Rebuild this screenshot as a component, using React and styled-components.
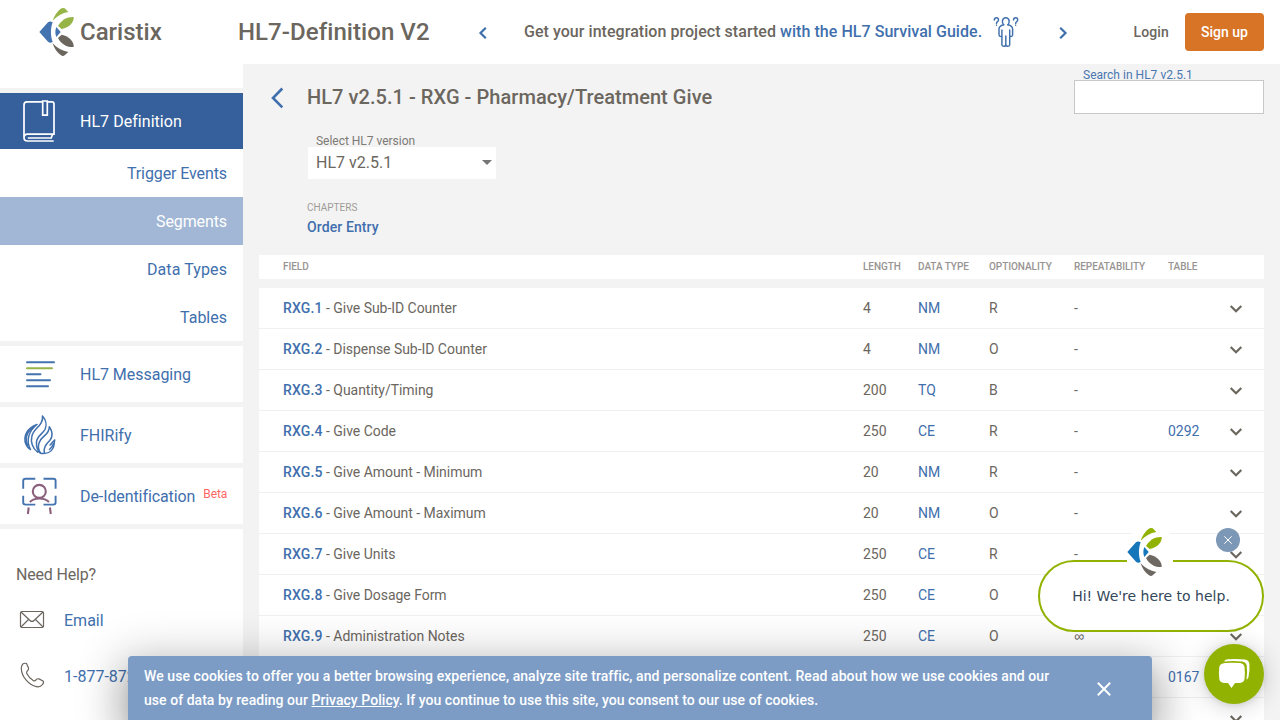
import React from 'react';
import styled, { createGlobalStyle } from 'styled-components';

const GlobalStyle = createGlobalStyle`
  *, *::before, *::after { box-sizing: border-box; }
  body { margin: 0; background: #f3f3f3; color: #6b665e; font-family: Roboto, "Liberation Sans", sans-serif; }
  a { color: #3f6fad; text-decoration: none; }
`;

const Page = styled.div`
  height: 720px;
  display: flex;
  flex-direction: column;
  overflow: hidden;
  position: relative;
`;

const Header = styled.header`
  flex: none;
  height: 64px;
  background: #fff;
  display: flex;
  align-items: center;
  padding: 0 16px 0 39px;
  font-weight: 500;
`;
const Brand = styled.div`
  width: 199px;
  display: flex;
  align-items: center;
  font-size: 24px;
  white-space: nowrap;
`;
const BrandName = styled.span`margin-left: 6px;`;
const ProductName = styled.div`
  width: 233px;
  font-size: 24px;
  letter-spacing: 0.06px;
  white-space: nowrap;
`;
const Promo = styled.div`
  width: 604px;
  display: flex;
  align-items: center;
  font-size: 16px;
  letter-spacing: 0.047px;
  white-space: nowrap;
`;
const PromoText = styled.span`margin-left: 29px; width: 459px; padding-bottom: 2px; white-space: pre;`;
const PromoFigure = styled.span`
  width: 28px;
  height: 32px;
  margin: 0 29px 0 10px;
  display: flex;
`;
const Login = styled.span`
  margin-left: auto;
  margin-right: 16px;
  font-size: 14px;
  letter-spacing: 0.15px;
`;
const SignUp = styled.button`
  width: 79px;
  height: 38px;
  padding: 0;
  border: 0;
  border-radius: 4px;
  background: #d87426;
  color: #fff;
  font: 500 14px Roboto, sans-serif;
`;

const Body = styled.div`flex: 1; min-height: 0; display: flex;`;

const Sidebar = styled.aside`
  width: 243px;
  flex: none;
  display: flex;
  flex-direction: column;
  overflow: hidden;
`;
const SidebarTop = styled.div`flex: none; height: 24px; background: #fff;`;
const NavItem = styled.div`
  flex: none;
  height: 56px;
  margin-top: 5px;
  display: flex;
  align-items: center;
  font-size: 16px;
  letter-spacing: ${p => p.$spacing || 0}px;
  color: ${p => (p.$active ? '#fff' : '#3f6fad')};
  background: ${p => (p.$active ? '#35609c' : '#fff')};
`;
const NavIcon = styled.span`width: 80px; height: 56px; flex: none; display: flex;`;
const Beta = styled.sup`
  margin-left: 8px;
  font-size: 12px;
  line-height: 14px;
  padding-bottom: 5px;
  color: #ff6663;
`;
const SubItem = styled.div`
  flex: none;
  height: 48px;
  padding-right: 16px;
  display: flex;
  align-items: center;
  justify-content: flex-end;
  font-size: 16px;
  letter-spacing: ${p => p.$spacing || 0}px;
  background: ${p => (p.$active ? '#a1b7d5' : '#fff')};
  color: ${p => (p.$active ? '#fff' : '#3f6fad')};
`;
const Help = styled.section`
  flex: 1;
  margin-top: 5px;
  padding: 36px 16px 0;
  background: #fff;
  font-size: 16px;
`;
const HelpTitle = styled.div`line-height: 20px; margin-bottom: 7px; letter-spacing: -0.18px;`;
const HelpRow = styled.div`
  height: 56px;
  display: flex;
  align-items: center;
  white-space: nowrap;
`;
const HelpIcon = styled.span`width: 48px; height: 32px; display: flex; flex: none;`;

const Main = styled.main`flex: 1; padding: 0 16px; min-width: 0;`;
const TitleBar = styled.div`
  height: 66px;
  display: flex;
  align-items: flex-start;
`;
const BackButton = styled.span`
  width: 48px;
  height: 66px;
  display: flex;
  align-items: center;
  padding: 0 0 0 11px;
`;
const Title = styled.h1`
  margin: 0;
  font-size: 20px;
  line-height: 66px;
  font-weight: 500;
  letter-spacing: 0.05px;
  white-space: nowrap;
`;
const Search = styled.label`
  margin-left: auto;
  width: 190px;
  padding-top: 4px;
  font-size: 12px;
  line-height: 12px;
  color: #4a76b1;
`;
const SearchLabel = styled.span`display: block; padding-left: 9px; height: 12px; line-height: 14px; letter-spacing: 0.02px;`;
const SearchInput = styled.input`
  display: block;
  width: 190px;
  height: 34px;
  border: 1px solid #c8c8c8;
  background: #fff;
  outline: none;
`;
const Filters = styled.div`padding-left: 48px;`;
const SelectLabel = styled.div`
  padding: 4px 0 0 9px;
  height: 17px;
  font-size: 12px;
  line-height: 14px;
  letter-spacing: -0.02px;
  color: #7d7a75;
`;
const Select = styled.div`
  width: 188px;
  height: 32px;
  margin-left: 1px;
  padding: 0 4px 1px 8px;
  background: #fff;
  display: flex;
  align-items: center;
  justify-content: space-between;
  font-size: 16px;
`;
const Caret = styled.span`
  border: 5px solid transparent;
  border-top-color: #757575;
  border-bottom: 0;
`;
const ChapterLabel = styled.div`
  margin-top: 22px;
  font-size: 10px;
  line-height: 14px;
  color: #9e9b97;
`;
const Chapter = styled.a`
  display: block;
  margin-top: 4px;
  font-size: 14px;
  line-height: 16px;
  font-weight: 500;
  letter-spacing: 0.1px;
`;

const Row = styled.div`
  display: grid;
  grid-template-columns: 580px 55px 71px 85px 94px 56px 24px;
  align-items: center;
  padding-left: 24px;
  height: 41px;
  background: #fff;
  border-bottom: 1px solid #f0f0f0;
  font-size: 14px;
`;
const HeadRow = styled(Row)`
  height: 24px;
  margin: 20px 0 9px;
  padding-bottom: 1px;
  border: 0;
  font-size: 10px;
  font-weight: 500;
  letter-spacing: -0.05px;
  color: #979491;
`;
const FieldName = styled.span`letter-spacing: -0.04px;`;
const FieldLink = styled.a`font-weight: 500; letter-spacing: 0.15px;`;
const Repeat = styled.span`font-family: ${p => (p.$infinite ? '"Liberation Sans"' : 'Roboto')}, sans-serif;`;

const CookieBar = styled.div`
  position: absolute;
  left: 128px;
  top: 656px;
  width: 1024px;
  height: 64px;
  padding: 0 40px 0 16px;
  display: flex;
  align-items: center;
  justify-content: space-between;
  background: #7c9cc6;
  color: #fff;
  border-radius: 4px 4px 0 0;
  box-shadow: 0 11px 15px -7px rgba(0,0,0,.2), 0 24px 38px 3px rgba(0,0,0,.14), 0 9px 46px 8px rgba(0,0,0,.24);
  font-size: 14px;
  font-weight: 500;
  line-height: 24px;
`;
const CookieText = styled.div`white-space: nowrap;`;
const CookieLine = styled.div`letter-spacing: ${p => p.$spacing}px;`;
const PolicyLink = styled.a`color: #fff; text-decoration: underline;`;

const ChatBubble = styled.div`
  position: absolute;
  left: 1038px;
  top: 560px;
  width: 226px;
  height: 72px;
  border: 2px solid #91b200;
  border-radius: 36px;
  background: #fff;
  display: flex;
  align-items: center;
  justify-content: center;
  font: 14px "DejaVu Sans", sans-serif;
  color: #33475b;
  white-space: nowrap;
`;
const ChatAvatar = styled.div`
  position: absolute;
  left: 87px;
  top: -35px;
  width: 46px;
  height: 52px;
  background: radial-gradient(circle at 24px 25px, #fff 26px, transparent 27px);
`;
const ChatClose = styled.div`
  position: absolute;
  left: 1216px;
  top: 528px;
  width: 24px;
  height: 24px;
  border-radius: 50%;
  background: #7c98b6;
`;
const ChatButton = styled.div`
  position: absolute;
  left: 1204px;
  top: 644px;
  width: 60px;
  height: 60px;
  border-radius: 50%;
  background: #91b200;
  box-shadow: 0 1px 6px rgba(0,0,0,.1), 0 2px 24px rgba(0,0,0,.2);
`;

function Logo({ green = '#97b447', blue = '#4474b0', gray = '#6b675f' }) {
  return (
    <svg width="35" height="50" viewBox="115 21 105 150" style={{ display: 'block' }}>
      <path fill={green} d="M156 62 C160 48 170 34 180 26 Q187 22 192 25 L203 36 C185 39 169 48 156 62Z" />
      <path fill={green} d="M172 78 C182 60 199 50 219 51 C220 68 206 82 183 87 Z" />
      <path fill={blue} d="M116 96 L142 67 Q148 62 156 67 C149 85 149 107 156 126 Q148 131 142 125 Z" />
      <path fill={blue} d="M167 81 L180 96 L167 111 C163 101 163 91 167 81Z" />
      <path fill={gray} d="M183 104 C206 109 220 124 219 141 C199 143 181 132 172 114 Z" />
      <path fill={gray} d="M156 130 C169 144 185 153 203 156 L192 166 Q187 170 180 165 C169 157 160 145 156 130Z" />
    </svg>
  );
}

const Chevron = ({ d, size, width = 2.2, color = '#3f6fad', box = '0 0 24 24' }) => (
  <svg width={size} height={size} viewBox={box} fill="none" stroke={color} strokeWidth={width}><path d={d} /></svg>
);

const BookIcon = () => (
  <svg width="80" height="56" fill="none" stroke="#fff" strokeWidth="1.7" strokeLinecap="round">
    <path d="M42 8.800H27Q24 8.800 24 12V44.500Q24 48 27.500 48H53M47.500 8.800H52Q54 8.800 54 11V41.200H27.500Q24 41.400 24 44.500M52.500 42Q50.800 44.600 52 45H28.500" />
    <path d="M42.700 8V22.200H47.300V8Z" strokeLinecap="butt" />
  </svg>
);
const LinesIcon = () => (
  <svg width="80" height="56" fill="none" stroke="#4474b0" strokeWidth="2" strokeLinecap="round">
    <path d="M27 16.300H54M27 28.300H40.500M27 34.300H50M27 40.200H48" />
    <path d="M27 22.300H52" stroke="#97b447" />
  </svg>
);
const FlameIcon = () => (
  <svg width="80" height="56" fill="none" stroke="#4070ad" strokeWidth="1.5" strokeLinecap="round" strokeLinejoin="round">
    <path d="M37.700 45.200C32.500 41.500 30.500 35 31.800 29.500C33.500 21 43.500 19 42.500 9C46 13 47 18.500 45 22.500C42.500 27 37 29 36.500 35C36.200 39.500 38 44 40.500 46.200" />
    <path d="M40.500 46.200C37.500 41.500 38 37 40.500 33C43.500 28.500 49.500 27 49.300 19.700C53 25 52.500 30 49.800 33.500C46.500 37 43 40 44.500 46.300" />
    <path d="M40.500 46.200C46.500 47.200 51.500 45 53.300 40.500C54.300 38 54.100 35.500 54.700 33C52.500 34.500 51.500 37 50 38" />
    <path d="M37 17.500C27.500 21 22.500 29 26 37.500C27 40 28.500 41.500 30.500 42.500C25.500 33.500 29 23.500 37 17.500Z" />
    <path d="M33 20.500C25.500 26 24.500 32 27.800 38.700" strokeWidth="1.800" />
    <path d="M49.500 42.500Q52.500 40 53.500 36.500" />
  </svg>
);
const DeidIcon = () => (
  <svg width="80" height="56" fill="none" stroke="#4474b0" strokeWidth="1.9">
    <path d="M23.200 20.700V13Q23.200 10.800 25.500 10.800H35.300M43.500 10.800H53.500Q55.600 10.800 55.600 13V20.700M23.200 27.700V34.500Q23.200 36.600 25.500 36.600H35.300M43.500 36.600H53.500Q55.600 36.600 55.600 34.500V27.700" />
    <g stroke="#8b607c" strokeWidth="2.1"><circle cx="39.300" cy="23.400" r="6.500" /><path d="M29.800 34C33.500 30.500 36 30.500 39.300 30.500S45.500 30.500 49 34M28.700 39.500L27.900 46M49.900 39.500L50.800 46" /></g>
  </svg>
);
const EmailIcon = () => (
  <svg width="32" height="32" fill="none" stroke="#6b665e" strokeWidth="1.2" strokeLinejoin="round">
    <rect x="4.500" y="7.500" width="23" height="16" rx="1.500" /><path d="M5 8L14 16.500Q16 18.500 18 16.500L27 8M5 23L12.500 15.500M27 23L19.500 15.500" />
  </svg>
);
const PhoneIcon = () => (
  <svg width="32" height="32" fill="none" stroke="#6b665e" strokeWidth="1.2" strokeLinejoin="round">
    <path d="M6.500 4.300Q8.500 2.700 10.500 3.500L12.500 8Q13 9.500 11.500 10.700Q10 12 10.800 13.500Q13 18 17.500 20.700Q19 21.300 20 19.900Q21.300 18.300 23 18.900L27 21Q28.300 22.500 26.500 24.500Q24.300 27.500 20.500 26.700C12.500 25 5.500 16.500 5.300 8.500Q5.300 6 6.500 4.300Z" />
  </svg>
);
const PersonIcon = () => (
  <svg width="28" height="32" fill="none" stroke="#3f6fad" strokeWidth="1.45" strokeLinecap="round" strokeLinejoin="round">
    <path d="M1.300 4Q1.500 1.800 3.500 1.800T5.500 4Q5.500 5.100 4.500 5.700T3.500 7.500M3.500 9.100V9.200M20.500 4Q20.700 1.800 22.700 1.800T24.700 4Q24.700 5.100 23.700 5.700T22.700 7.500M22.700 9.100V9.200" />
    <path d="M10.700 8.800Q9.200 7.500 9.400 4.800Q10.100 1.800 12.800 1.800T16.200 4.800Q16.400 7.500 14.900 8.800" />
    <path d="M10.700 8.800Q6 10 6 13V19Q6.200 20.800 8.900 20.500V29Q9.100 30.300 10.900 30.300Q12.800 30.300 12.800 28.500V20V28.500Q12.800 30.300 14.700 30.300Q16.500 30.300 16.700 29V20.500Q19.400 20.800 19.600 19V13Q19.600 10 14.900 8.800M8.900 20.500V14M16.700 20.500V14" />
  </svg>
);

const rows = [
  ['Give Sub-ID Counter', '4', 'NM', 'R', '-', ''],
  ['Dispense Sub-ID Counter', '4', 'NM', 'O', '-', ''],
  ['Quantity/Timing', '200', 'TQ', 'B', '-', ''],
  ['Give Code', '250', 'CE', 'R', '-', '0292'],
  ['Give Amount - Minimum', '20', 'NM', 'R', '-', ''],
  ['Give Amount - Maximum', '20', 'NM', 'O', '-', ''],
  ['Give Units', '250', 'CE', 'R', '-', ''],
  ['Give Dosage Form', '250', 'CE', 'O', '-', ''],
  ['Administration Notes', '250', 'CE', 'O', '∞', ''],
  ['Substitution Status', '1', 'ID', 'O', '-', '0167'],
  ['Dispense-to Location', '200', 'LA2', 'O', '-', ''],
];

export default function App() {
  return (
    <Page>
      <GlobalStyle />
      <Header>
        <Brand><Logo /><BrandName>Caristix</BrandName></Brand>
        <ProductName>HL7-Definition V2</ProductName>
        <Promo>
          <Chevron size={24} d="M14.800 7.700L9.500 13L14.800 18.300" />
          <PromoText>Get your integration project started <a href="#guide">with the HL7 Survival Guide.</a></PromoText>
          <PromoFigure><PersonIcon /></PromoFigure>
          <Chevron size={24} d="M10.200 7.700L15.500 13L10.200 18.300" />
        </Promo>
        <Login>Login</Login>
        <SignUp>Sign up</SignUp>
      </Header>
      <Body>
        <Sidebar>
          <SidebarTop />
          <NavItem $active $spacing={0.04}><NavIcon><BookIcon /></NavIcon>HL7 Definition</NavItem>
          <SubItem $spacing={-0.1}>Trigger Events</SubItem>
          <SubItem $active $spacing={-0.1}>Segments</SubItem>
          <SubItem $spacing={0.1}>Data Types</SubItem>
          <SubItem>Tables</SubItem>
          <NavItem $spacing={-0.03}><NavIcon><LinesIcon /></NavIcon>HL7 Messaging</NavItem>
          <NavItem><NavIcon><FlameIcon /></NavIcon>FHIRify</NavItem>
          <NavItem $spacing={-0.09}><NavIcon><DeidIcon /></NavIcon>De-Identification<Beta>Beta</Beta></NavItem>
          <Help>
            <HelpTitle>Need Help?</HelpTitle>
            <HelpRow><HelpIcon><EmailIcon /></HelpIcon><a href="#email">Email</a></HelpRow>
            <HelpRow><HelpIcon><PhoneIcon /></HelpIcon><a href="#phone">1-877-872-0027</a></HelpRow>
          </Help>
        </Sidebar>
        <Main>
          <TitleBar>
            <BackButton><Chevron size={24} width={2.600} d="M12.300 3.500L3 13L12.300 22.300" /></BackButton>
            <Title>HL7 v2.5.1 - RXG - Pharmacy/Treatment Give</Title>
            <Search><SearchLabel>Search in HL7 v2.5.1</SearchLabel><SearchInput /></Search>
          </TitleBar>
          <Filters>
            <SelectLabel>Select HL7 version</SelectLabel>
            <Select>HL7 v2.5.1<Caret /></Select>
            <ChapterLabel>CHAPTERS</ChapterLabel>
            <Chapter href="#order-entry">Order Entry</Chapter>
          </Filters>
          <HeadRow>
            <span>FIELD</span><span>LENGTH</span><span>DATA TYPE</span><span>OPTIONALITY</span><span>REPEATABILITY</span><span>TABLE</span>
          </HeadRow>
          {rows.map(([name, length, type, opt, rep, table], i) => (
            <Row key={name}>
              <FieldName><FieldLink href="#field">RXG.{i + 1}</FieldLink> - {name}</FieldName>
              <span>{length}</span>
              <a href="#type">{type}</a>
              <span>{opt}</span>
              <Repeat $infinite={rep === '∞'}>{rep}</Repeat>
              <a href="#table">{table}</a>
              <Chevron size={24} color="#6b665e" d="M6.700 10L12 15.300L17.300 10" />
            </Row>
          ))}
        </Main>
      </Body>
      <CookieBar>
        <CookieText>
          <CookieLine $spacing={0.071}>We use cookies to offer you a better browsing experience, analyze site traffic, and personalize content. Read about how we use cookies and our</CookieLine>
          <CookieLine $spacing={0.043}>use of data by reading our <PolicyLink href="#privacy">Privacy Policy</PolicyLink>. If you continue to use this site, you consent to our use of cookies.</CookieLine>
        </CookieText>
        <Chevron size={16} width={2} color="#fff" box="0 0 16 16" d="M1.800 2.800L14.200 15.200M14.200 2.800L1.800 15.200" />
      </CookieBar>
      <ChatBubble>
        <ChatAvatar><Logo green="#91b200" blue="#1577b9" gray="#6e6863" /></ChatAvatar>
        Hi! We're here to help.
      </ChatBubble>
      <ChatClose><Chevron size={24} width={1} color="#fff" d="M8.300 8.300L15.700 15.700M15.700 8.300L8.300 15.700" /></ChatClose>
      <ChatButton>
        <svg width="60" height="60" fill="#fff">
          <path d="M21 19Q28 18.500 36 19Q40 19.500 40.500 23Q41.300 29 40.500 35Q40 38.500 36 39H31L27.500 44L24 39H20Q15.800 38.500 15.300 35Q14.500 29 15.300 23Q16 19.500 21 19Z" />
          <path d="M20 17.500Q21 15.300 24 15.200Q33 14.500 41 15.500Q45 16 45.400 20Q46 26 44.500 33Q44 35 42.500 35.500Q43.600 28 42.700 21.500Q42 18 38 17.500Q29 16.500 20 17.500Z" />
        </svg>
      </ChatButton>
    </Page>
  );
}
